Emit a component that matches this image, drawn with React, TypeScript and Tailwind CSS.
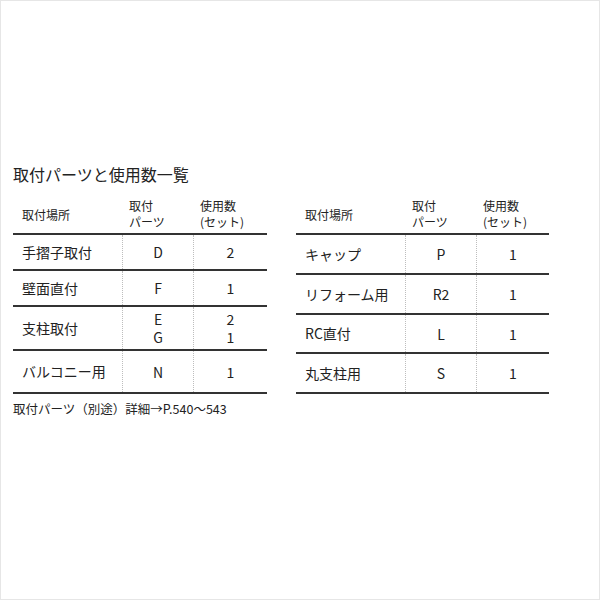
const font = { fontFamily: '"Noto Sans CJK JP", "Noto Sans", sans-serif' };

type Row = { place: string; parts: string[]; counts: string[]; h: string };

const leftRows: Row[] = [
  { place: "手摺子取付", parts: ["D"], counts: ["2"], h: "h-[36px]" },
  { place: "壁面直付", parts: ["F"], counts: ["1"], h: "h-[36px]" },
  { place: "支柱取付", parts: ["E", "G"], counts: ["2", "1"], h: "h-[44px]" },
  { place: "バルコニー用", parts: ["N"], counts: ["1"], h: "h-[43px]" },
];

const rightRows: Row[] = [
  { place: "キャップ", parts: ["P"], counts: ["1"], h: "h-[40px]" },
  { place: "リフォーム用", parts: ["R2"], counts: ["1"], h: "h-[40px]" },
  { place: "RC直付", parts: ["L"], counts: ["1"], h: "h-[39px]" },
  { place: "丸支柱用", parts: ["S"], counts: ["1"], h: "h-[40px]" },
];

const PartsTable = ({ rows, cols }: { rows: Row[]; cols: string }) => (
  <div className="flex flex-col">
    <div className={`grid ${cols} h-[41px] border-b-2 border-[#333] text-[12px] leading-[16px] text-[#222]`}>
      <div className="flex items-center pl-[9px] pt-[2px]">取付場所</div>
      <div className="flex flex-col justify-center pl-[7px]">
        <span>取付</span>
        <span>パーツ</span>
      </div>
      <div className="flex flex-col justify-center pl-[6px]">
        <span>使用数</span>
        <span>(セット)</span>
      </div>
    </div>
    {rows.map((r, i) => (
      <div key={i} className={`grid ${cols} ${r.h} border-b-2 border-[#333] text-[14px] text-[#222]`}>
        <div className="flex items-center pl-[9px]">{r.place}</div>
        <div className="flex flex-col items-center justify-center leading-[18px] border-l border-r border-dotted border-[#bdbdbd]">
          {r.parts.map((p) => (
            <span key={p}>{p}</span>
          ))}
        </div>
        <div className="flex flex-col items-center justify-center leading-[18px]">
          {r.counts.map((c, j) => (
            <span key={j}>{c}</span>
          ))}
        </div>
      </div>
    ))}
  </div>
);

export default function App() {
  return (
    <div className="w-[600px] h-[600px] bg-white border border-[#e6e6e6]" style={font}>
      <div className="pt-[161px] pl-[12px]">
        <h1 className="text-[16px] leading-[24px] font-normal text-[#222]">取付パーツと使用数一覧</h1>
        <div className="flex gap-[29px] mt-[8px]">
          <PartsTable rows={leftRows} cols="grid-cols-[109px_72px_73px]" />
          <PartsTable rows={rightRows} cols="grid-cols-[109px_72px_72px]" />
        </div>
        <p className="mt-[6px] text-[12.5px] leading-[18px] text-[#222]">取付パーツ（別途）詳細→P.540～543</p>
      </div>
    </div>
  );
}
